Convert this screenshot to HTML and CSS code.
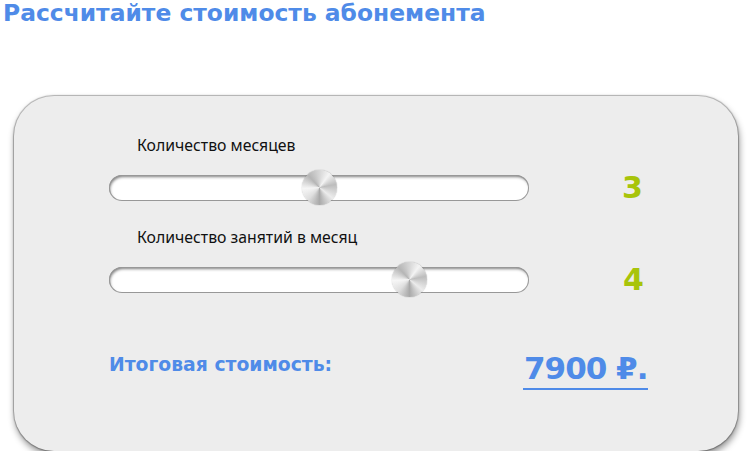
FILE: index.html
```html
<!DOCTYPE html>
<html lang="ru">
<head>
<meta charset="utf-8">
<title>Калькулятор</title>
<link rel="stylesheet" href="styles.css">
</head>
<body>
<h1 class="title">Рассчитайте стоимость абонемента</h1>
<div class="card">
  <div class="row">
    <div class="slider-group">
      <div class="label">Количество месяцев</div>
      <div class="track">
        <div class="thumb" style="left: 50%"></div>
      </div>
    </div>
    <div class="value value-1">3</div>
  </div>
  <div class="row row-2">
    <div class="slider-group">
      <div class="label">Количество занятий в месяц</div>
      <div class="track">
        <div class="thumb" style="left: 71.4%"></div>
      </div>
    </div>
    <div class="value value-2">4</div>
  </div>
  <div class="total">
    <div class="total-label">Итоговая стоимость:</div>
    <div class="total-price">7900 ₽.</div>
  </div>
</div>
</body>
</html>
```

FILE: styles.css
```css
* { box-sizing: border-box; }
html, body { margin: 0; padding: 0; background: #ffffff; }
body {
  font-family: "Noto Sans", "Liberation Sans", sans-serif;
  color: #1a1a1a;
}
.title {
  margin: 0;
  padding: 0 0 0 3px;
  height: 27px;
  font-family: "DejaVu Sans", sans-serif;
  font-weight: 700;
  font-size: 23.4px;
  line-height: 27px;
  color: #4f8be8;
  white-space: nowrap;
}
.card {
  margin: 69px 0 0 14px;
  width: 724px;
  height: 355px;
  background: #ededed;
  border-radius: 40px;
  box-shadow: 0 0 1px 1px rgba(0,0,0,0.28), 1px 4px 7px rgba(0,0,0,0.45);
  padding: 40px 0 0 95px;
}
.row {
  display: flex;
  align-items: flex-start;
}
.row-2 { margin-top: 25px; }
.slider-group { width: 420px; }
.label {
  padding-left: 28px;
  font-size: 15.8px;
  line-height: 18px;
  color: #111;
}
.track {
  position: relative;
  margin-top: 21px;
  height: 26px;
  border-radius: 13px;
  background: #ffffff;
  box-shadow: inset 0 0 0 1px #989898, inset 1px 2px 3px rgba(0,0,0,0.5);
}
.thumb {
  position: absolute;
  top: 50%;
  width: 35px;
  height: 35px;
  margin: -18px 0 0 -17px;
  border-radius: 50%;
  background: conic-gradient(#d6d6d6, #f4f4f4 10%, #bdbdbd 22%, #ececec 36%, #a9a9a9 50%, #dedede 62%, #f6f6f6 74%, #b5b5b5 88%, #d6d6d6);
  box-shadow: 0 0 1px rgba(0,0,0,0.45);
}
.value {
  margin-left: 93px;
  font-family: "DejaVu Sans", sans-serif;
  font-weight: 700;
  font-size: 30px;
  line-height: 30px;
  color: #a8c40a;
}
.value-1 { margin-top: 37px; }
.value-2 { margin-top: 37px; margin-left: 94px; }
.total {
  display: flex;
  align-items: flex-start;
  margin-top: 55px;
}
.total-label {
  width: 414px;
  margin-top: 4px;
  font-family: "DejaVu Sans", sans-serif;
  font-weight: 700;
  font-size: 18.8px;
  line-height: 22px;
  color: #4f8be8;
  white-space: nowrap;
}
.total-price {
  margin-top: 1px;
  font-family: "DejaVu Sans", sans-serif;
  font-weight: 700;
  font-size: 31px;
  line-height: 34px;
  letter-spacing: -1px;
  color: #4f8be8;
  border-bottom: 2px solid #4f8be8;
  padding: 0 1px 3px;
  white-space: nowrap;
}
```
